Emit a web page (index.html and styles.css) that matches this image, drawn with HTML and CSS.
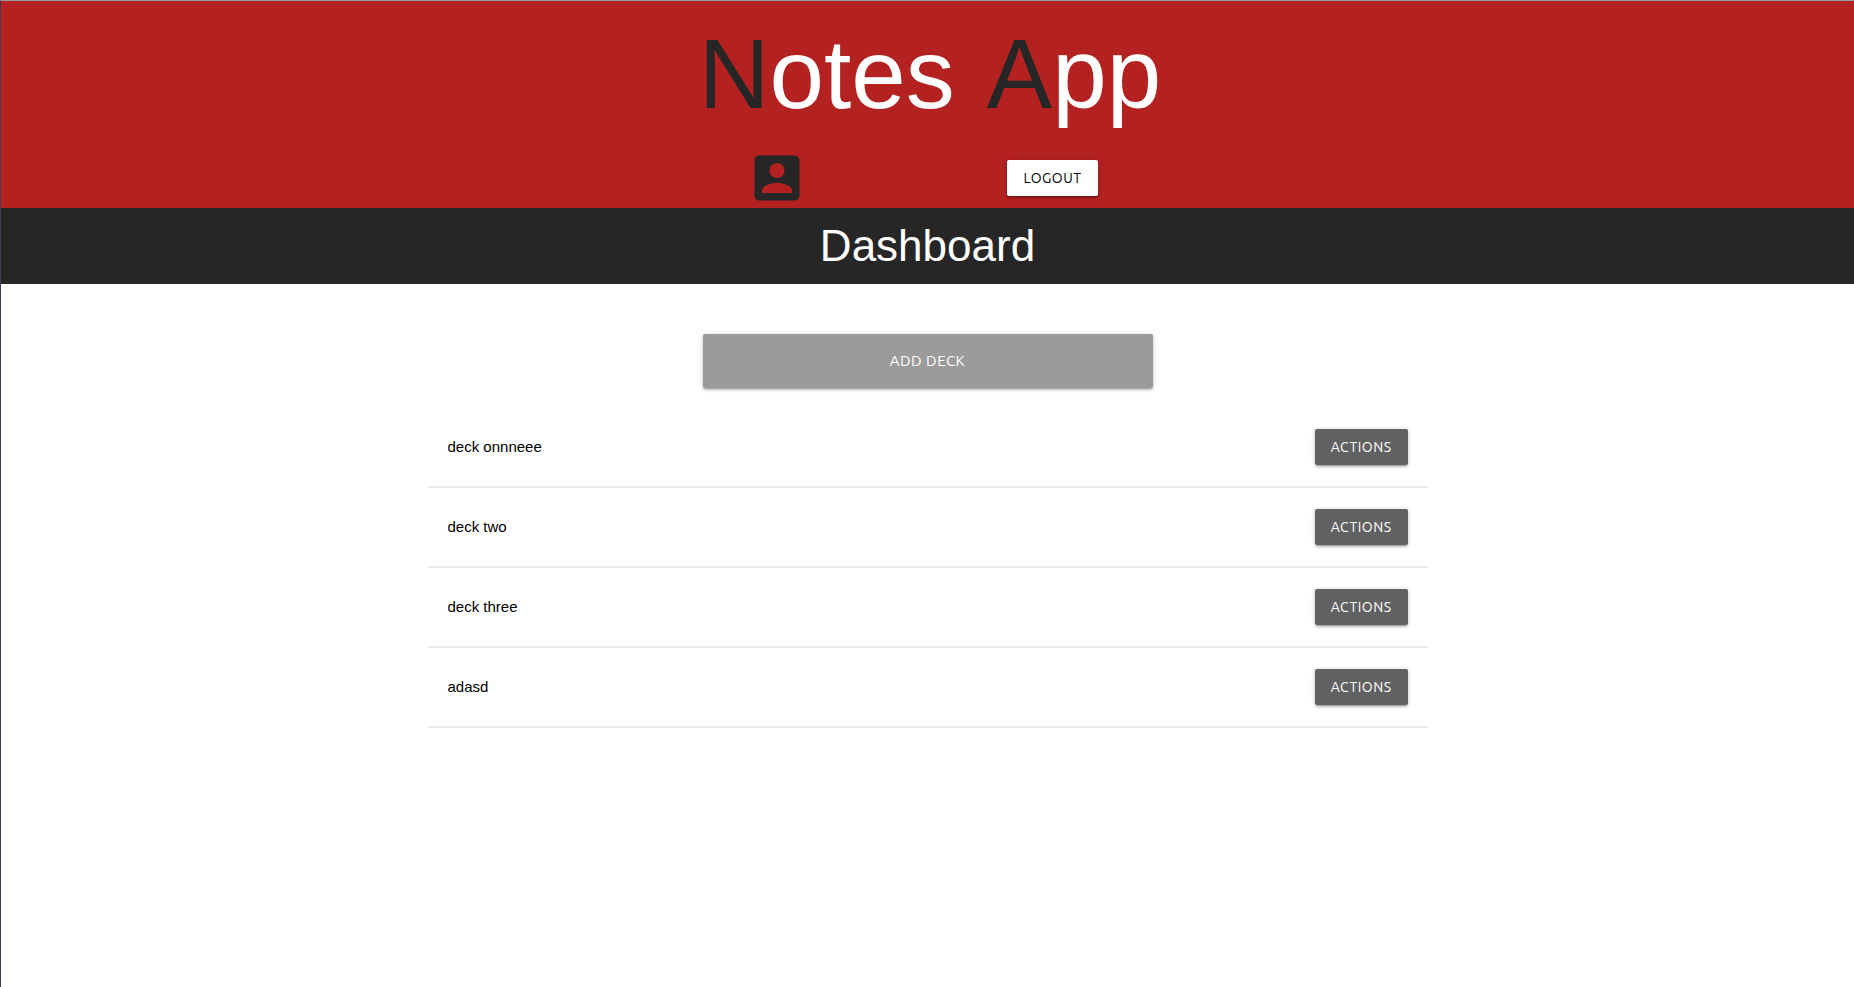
FILE: index.html
```html
<!DOCTYPE html>
<html lang="en">
<head>
<meta charset="utf-8">
<meta name="viewport" content="width=device-width, initial-scale=1">
<title>Notes App</title>
<link rel="stylesheet" href="styles.css">
</head>
<body>
<header class="header">
  <h1 class="logo"><span><span class="logo-cap">N</span>otes</span> <span><span class="logo-cap">A</span>pp</span></h1>
  <nav class="nav">
    <a class="profile" href="#profile" aria-label="Profile">
      <svg class="profile-icon" viewBox="0 0 24 24" aria-hidden="true"><path d="M3 5v14c0 1.100.890 2 2 2h14c1.100 0 2-.9 2-2V5c0-1.100-.9-2-2-2H5c-1.110 0-2 .9-2 2zm12 4c0 1.660-1.340 3-3 3s-3-1.340-3-3 1.340-3 3-3 3 1.340 3 3zm-9 8c0-2 4-3.100 6-3.100s6 1.100 6 3.100v1H6v-1z"/></svg>
    </a>
    <button class="btn btn-light" type="button">Logout</button>
  </nav>
</header>
<h2 class="page-title">Dashboard</h2>
<main class="content">
  <button class="btn btn-large" type="button">Add deck</button>
  <ul class="decks">
    <li class="deck"><span>deck onnneee</span><button class="btn" type="button">Actions</button></li>
    <li class="deck"><span>deck two</span><button class="btn" type="button">Actions</button></li>
    <li class="deck"><span>deck three</span><button class="btn" type="button">Actions</button></li>
    <li class="deck"><span>adasd</span><button class="btn" type="button">Actions</button></li>
  </ul>
</main>
</body>
</html>
```
FILE: styles.css
```css
* {
  box-sizing: border-box;
}

body {
  margin: 0;
  min-height: 100vh;
  border-top: 1px solid #9b9b9b;
  border-left: 1px solid #4a3a50;
  background: #fff;
  color: #000;
  font: 15px/22px "Liberation Sans", Arial, sans-serif;
}

.header {
  background: #b42121;
  color: #fff;
}

.logo {
  display: flex;
  justify-content: center;
  gap: 32px;
  margin: 0;
  padding-left: 5px;
  font-size: 98px;
  font-weight: 400;
  line-height: 147px;
}

.logo-cap,
.profile {
  color: #262626;
}

.nav {
  display: flex;
  justify-content: space-around;
  align-items: center;
  max-width: 560px;
  margin: 0 auto;
  padding-right: 10px;
}

.profile,
.profile-icon {
  display: block;
}

.profile-icon {
  width: 60px;
  height: 60px;
  fill: currentColor;
}

.page-title {
  margin: 0;
  padding: 5px 0;
  background: #262626;
  color: #fff;
  font-size: 44px;
  font-weight: 400;
  line-height: 66px;
  text-align: center;
}

.content {
  max-width: 1000px;
  margin: 0 auto;
  padding-top: 50px;
}

.btn {
  height: 36px;
  padding: 0 16px;
  border: 0;
  border-radius: 2px;
  background: #616161;
  box-shadow: 0 2px 2px 0 rgba(0, 0, 0, .14), 0 3px 1px -2px rgba(0, 0, 0, .12), 0 1px 5px 0 rgba(0, 0, 0, .2);
  color: #fff;
  font: 14px/36px Ubuntu, "Noto Sans", sans-serif;
  letter-spacing: .5px;
  text-transform: uppercase;
  cursor: pointer;
}

.btn-light {
  background: #fff;
  color: #000;
}

.btn-large {
  display: block;
  width: 100%;
  max-width: 450px;
  height: 54px;
  margin: 0 auto;
  background: #9b9b9b;
  font-size: 15px;
}

.decks {
  margin: 20px 0 0;
  padding: 0;
  list-style: none;
}

.deck {
  display: flex;
  justify-content: space-between;
  align-items: center;
  height: 80px;
  padding: 0 20px;
  border-bottom: 2px solid #ebebeb;
}
```
